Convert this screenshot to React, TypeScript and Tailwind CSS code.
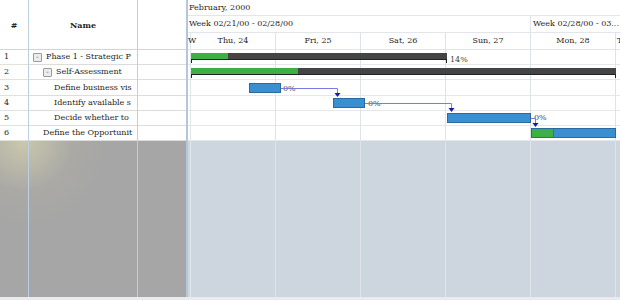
import React from "react";

const font = { fontFamily: '"DejaVu Serif", serif' };

const rows = [
  { n: "1", text: "Phase 1 - Strategic P", box: 34, h: 15 },
  { n: "2", text: "Self-Assessment", box: 44, h: 15 },
  { n: "3", text: "Define business vis", pad: 25, h: 16 },
  { n: "4", text: "Identify available s", pad: 25, h: 15 },
  { n: "5", text: "Decide whether to", pad: 25, h: 15 },
  { n: "6", text: "Define the Opportunit", pad: 14, h: 15 },
];

function Box() {
  return (
    <span className="inline-flex items-center justify-center w-[9px] h-[9px] border border-[#9a9a9a] bg-[#ececec] rounded-[1px] text-[7px] leading-none text-[#444] mr-[4px]">
      -
    </span>
  );
}

export default function App() {
  return (
    <div className="w-[620px] h-[300px] flex flex-col bg-[#e9ebee] overflow-hidden text-[#1e1e1e]" style={font}>
      <div className="h-[297px] flex">
        {/* left grid */}
        <div className="w-[186px] shrink-0 flex">
          {/* # column */}
          <div className="w-[29px] flex flex-col border-r border-[#bcd0e2]">
            <div className="h-[50px] flex items-center justify-center text-[8px] font-bold border-b border-[#d4d4d4] bg-white">#</div>
            {rows.map((r) => (
              <div key={r.n} style={{ height: r.h }} className="flex items-center pl-[4px] text-[8px] border-b border-[#e2e2d8] bg-white">{r.n}</div>
            ))}
            <div className="flex-1 bg-[radial-gradient(circle_at_24px_0px,#cac8ad_0px,#aaa9a5_50px,#a6a6a6_85px)]" />
          </div>
          {/* Name column */}
          <div className="w-[109px] flex flex-col border-r border-[#bcd0e2]">
            <div className="h-[50px] flex items-center justify-center text-[8px] font-bold border-b border-[#d4d4d4] bg-white">Name</div>
            {rows.map((r) => (
              <div
                key={r.n}
                className="flex items-center text-[8px] whitespace-nowrap overflow-hidden border-b border-[#dcdcdc] bg-white"
                style={{ height: r.h, paddingLeft: r.box ? r.box - 30 : r.pad }}
              >
                {r.box ? <Box /> : null}
                {r.text}
              </div>
            ))}
            <div className="flex-1 bg-[radial-gradient(circle_at_-6px_0px,#cac8ad_0px,#aaa9a5_50px,#a6a6a6_85px)]" />
          </div>
          {/* empty column */}
          <div className="flex-1 flex flex-col">
            <div className="h-[50px] border-b border-[#d4d4d4] bg-white" />
            {rows.map((r) => (
              <div key={r.n} style={{ height: r.h }} className="border-b border-[#dcdcdc] bg-white" />
            ))}
            <div className="flex-1 bg-[#a6a6a6]" />
          </div>
        </div>
        {/* splitter */}
        <div className="w-[2px] shrink-0 bg-[#b4c6d8]" />
        {/* gantt */}
        <div className="flex-1 min-w-0 relative flex flex-col bg-[#cdd6df]">
          <div className="h-[16px] shrink-0 flex items-center pl-[1px] text-[8px] bg-white border-b border-[#e2e6ea]">February, 2000</div>
          <div className="h-[17px] shrink-0 flex bg-white border-b border-[#e2e6ea] text-[8px]">
            <div className="w-[343px] shrink-0 flex items-center pl-[1px] border-r border-[#e2e6ea]">Week 02/21/00 - 02/28/00</div>
            <div className="flex-1 min-w-0 flex items-center pl-[2px] whitespace-nowrap overflow-hidden">Week 02/28/00 - 03...</div>
          </div>
          <div className="h-[17px] shrink-0 flex bg-white border-b border-[#e2e6ea] text-[8px] whitespace-nowrap">
            <div className="w-[3px] shrink-0 border-r border-[#e2e6ea] overflow-visible flex items-center relative z-10">W</div>
            {["Thu, 24", "Fri, 25", "Sat, 26", "Sun, 27", "Mon, 28"].map((d) => (
              <div key={d} className="w-[85px] shrink-0 flex items-center justify-center border-r border-[#e2e6ea]">{d}</div>
            ))}
            <div className="flex-1 min-w-0 flex items-center pl-[1px]">T</div>
          </div>
          <div className="flex flex-col bg-white">
            {rows.map((r) => (
              <div key={r.n} style={{ height: r.h }} className="border-b border-[#e4e8ec]" />
            ))}
          </div>
          <div className="flex-1" />
          {/* vertical day lines */}
          <div className="absolute left-0 right-0 top-[33px] bottom-0 flex pointer-events-none">
            <div className="w-[3px] shrink-0 border-r border-[#e2e6ea]" />
            {[0, 1, 2, 3, 4].map((i) => (
              <div key={i} className="w-[85px] shrink-0 border-r border-[#dde3e9]" />
            ))}
          </div>
          {/* bars */}
          <div className="absolute inset-0 pointer-events-none">
            {/* row 1 summary */}
            <div className="absolute left-[3px] top-[53px] w-[256px] h-[7px] bg-[#444] border-b border-[#222]">
              <div className="h-full w-[37px] bg-[#3cb043]" />
            </div>
            <div className="absolute left-[3px] top-[59px] w-[1px] h-[4px] bg-[#222]" />
            <div className="absolute left-[258px] top-[59px] w-[1px] h-[4px] bg-[#222]" />
            <div className="absolute left-[262px] top-[54px] text-[8px] text-[#444]">14%</div>
            {/* row 2 summary */}
            <div className="absolute left-[3px] top-[68px] w-[425px] h-[7px] bg-[#444] border-b border-[#222]">
              <div className="h-full w-[107px] bg-[#3cb043]" />
            </div>
            <div className="absolute left-[3px] top-[74px] w-[1px] h-[4px] bg-[#222]" />
            <div className="absolute left-[427px] top-[74px] w-[1px] h-[4px] bg-[#222]" />
            {/* row 3 */}
            <div className="absolute left-[61px] top-[83px] w-[32px] h-[10px] bg-[#3a8fd0] border border-[#2a6aa0]" />
            <div className="absolute left-[95px] top-[83px] text-[8px] text-[#444]">0%</div>
            {/* row 4 */}
            <div className="absolute left-[145px] top-[98px] w-[32px] h-[10px] bg-[#3a8fd0] border border-[#2a6aa0]" />
            <div className="absolute left-[180px] top-[98px] text-[8px] text-[#444]">0%</div>
            {/* row 5 */}
            <div className="absolute left-[259px] top-[113px] w-[84px] h-[10px] bg-[#3a8fd0] border border-[#2a6aa0]" />
            <div className="absolute left-[346px] top-[112px] text-[8px] text-[#444]">0%</div>
            {/* row 6 */}
            <div className="absolute left-[343px] top-[128px] w-[85px] h-[10px] bg-[#3a8fd0] border border-[#2a6aa0] flex">
              <div className="h-full w-[22px] bg-[#3cb043] border-r border-[#2a8a30]" />
            </div>
            <svg className="absolute inset-0" width="432" height="300">
              <g fill="none" stroke="#7b7be0" strokeWidth="1">
                <path d="M93 88.5 H149.5 V95" />
                <path d="M177 103.5 H263.5 V110" />
                <path d="M343 118.5 H347.5 V125" />
              </g>
              <g fill="#1a1aa8">
                <path d="M146.5 93 L152.5 93 L149.5 97 Z" />
                <path d="M260.5 108 L266.5 108 L263.5 112 Z" />
                <path d="M344.5 123 L350.5 123 L347.5 127 Z" />
              </g>
            </svg>
          </div>
        </div>
      </div>
    </div>
  );
}
